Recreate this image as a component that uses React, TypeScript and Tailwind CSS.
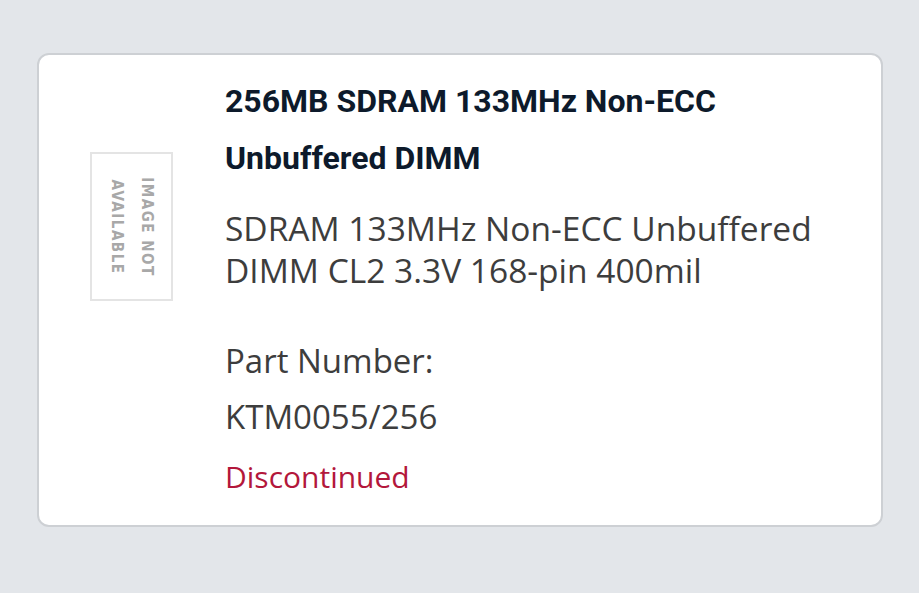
export default function App() {
  return (
    <div className="min-h-[593px] w-full bg-[#e3e6ea] pt-[53px] pl-[37px] pr-[36px]">
      {/* Product card */}
      <div className="flex h-[474px] rounded-[12px] border-2 border-[#cdd0d4] bg-white">
        {/* Image placeholder */}
        <div className="w-[186px] shrink-0 pl-[51px] pt-[97px]">
          <div className="flex h-[149px] w-[83px] items-center justify-center border-2 border-[#e4e4e4]">
            <div className="rotate-90 whitespace-nowrap text-center font-['DejaVu_Sans_Condensed',sans-serif] text-[15px] font-bold leading-[30px] tracking-[1.5px] text-[#a8a8a8]">
              IMAGE NOT
              <br />
              AVAILABLE
            </div>
          </div>
        </div>

        {/* Details */}
        <div className="flex-1 pt-[18px]">
          <h2 className="font-['Roboto',sans-serif] text-[32px] font-bold leading-[57px] text-[#0d1a2b]">
            256MB SDRAM 133MHz Non-ECC
            <br />
            Unbuffered DIMM
          </h2>
          <p className="mt-[20px] font-['Open_Sans',sans-serif] text-[33.5px] leading-[42px] text-[#3d3d3d]">
            SDRAM 133MHz Non-ECC Unbuffered
            <br />
            DIMM CL2 3.3V 168-pin 400mil
          </p>
          <p className="mt-[42px] font-['Open_Sans',sans-serif] text-[33px] leading-[56px] text-[#3d3d3d]">
            Part Number:
            <br />
            KTM0055/256
          </p>
          <p className="mt-[12px] font-['Open_Sans',sans-serif] text-[30px] leading-[40px] text-[#b3173b]">
            Discontinued
          </p>
        </div>
      </div>
    </div>
  );
}
